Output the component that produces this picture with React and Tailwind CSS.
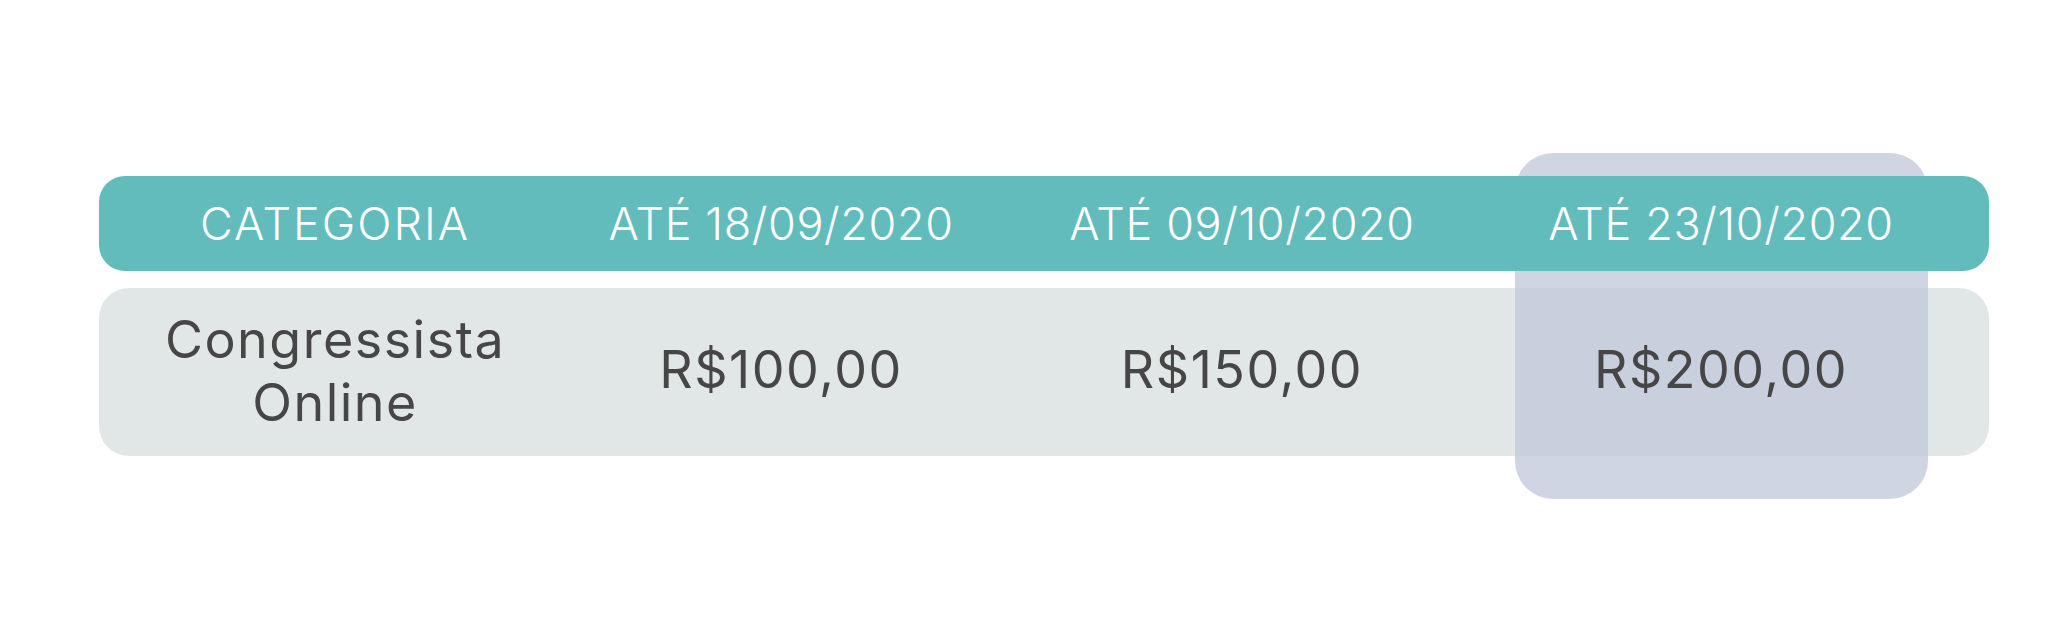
import React from "react";

const prices = [
    { label: "ATÉ 18/09/2020", value: "R$100,00" },
    { label: "ATÉ 09/10/2020", value: "R$150,00" },
    { label: "ATÉ 23/10/2020", value: "R$200,00" },
];

export default function App() {
    return (
        <div className="w-full h-[617px] bg-white pt-[176px] pl-[99px] pr-[59px]" style={{ fontFamily: "Inter, 'Noto Sans', sans-serif" }}>
            <div className="relative">
                {/* destaque do último lote */}
                <div className="absolute left-[1416px] top-[-23px] w-[413px] h-[346px] rounded-[38px] bg-[rgba(192,201,218,0.77)] z-10"></div>

                <div className="relative z-20 grid grid-cols-[472px_420px_502px_456px] items-center h-[95px] rounded-[26px] bg-[#62bcbc] text-white text-[45px] font-light">
                    <div className="text-center tracking-[2px]">CATEGORIA</div>
                    {prices.map(p => (
                        <div key={p.label} className="text-center tracking-[0.6px]">{p.label}</div>
                    ))}
                </div>

                <div className="mt-[17px] grid grid-cols-[472px_420px_502px_456px] items-center h-[168px] rounded-[30px] bg-[#e1e7e7] text-[#464646] text-[52px] tracking-[1.5px]">
                    <div className="relative z-20 text-center leading-[63px] pb-[2px]">Congressista<br/>Online</div>
                    {prices.map(p => (
                        <div key={p.value} className="relative z-20 text-center pb-[4px]">{p.value}</div>
                    ))}
                </div>
            </div>
        </div>
    );
}
